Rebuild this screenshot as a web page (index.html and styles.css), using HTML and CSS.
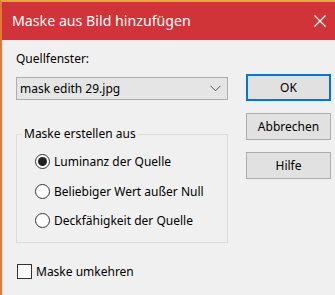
FILE: index.html
```html
<!DOCTYPE html>
<html lang="de">
<head>
  <meta charset="UTF-8" />
  <title>Maske aus Bild hinzufügen</title>
  <link rel="stylesheet" href="styles.css">
</head>
<body>

  <div class="window">
    <!-- Title bar -->
    <div class="titlebar">
      <span class="title">Maske aus Bild hinzufügen</span>
      <svg class="close" width="12" height="12" viewBox="0 0 12 12">
        <path d="M0.5 0.5 L11.5 11.5 M11.5 0.5 L0.5 11.5" stroke="#fff" stroke-width="1.2" fill="none"/>
      </svg>
    </div>

    <div class="content">
      <div class="left">
        <div class="label">Quellfenster:</div>
        <div class="combo">
          <span>mask edith 29.jpg</span>
          <svg width="11" height="7" viewBox="0 0 11 7">
            <path d="M0.5 0.8 L5.5 5.8 L10.5 0.8" stroke="#555" stroke-width="1" fill="none"/>
          </svg>
        </div>

        <fieldset class="group">
          <legend>Maske erstellen aus</legend>
          <div class="radio-row"><span class="radio checked"></span>Luminanz der Quelle</div>
          <div class="radio-row"><span class="radio"></span>Beliebiger Wert außer Null</div>
          <div class="radio-row"><span class="radio"></span>Deckfähigkeit der Quelle</div>
        </fieldset>

        <div class="check-row"><span class="checkbox"></span>Maske umkehren</div>
      </div>

      <div class="right">
        <button class="btn default">OK</button>
        <button class="btn">Abbrechen</button>
        <button class="btn">Hilfe</button>
      </div>
    </div>
  </div>

</body>
</html>
```

FILE: styles.css
```css
* { box-sizing: border-box; }
body {
  margin: 0;
  background: #f0f0f0;
  font-family: 'Noto Sans', 'Open Sans', sans-serif;
  font-size: 12px;
  color: #000;
  overflow: hidden;
}

.window {
  height: 295px;
  border-top: 2px solid #e6a83e;
  border-left: 2px solid #e5773a;
  background: #f0f0f0;
}

.titlebar {
  height: 38px;
  background: #d13438;
  display: flex;
  align-items: center;
  justify-content: space-between;
  padding: 0 9px 0 10px;
  color: #fff;
}

.title {
  font-size: 14.2px;
  margin-top: -2px;
}

.content {
  display: flex;
  padding: 11px 0 0 14px;
}

.left {
  width: 212px;
}

.label {
  line-height: 16px;
  margin-bottom: 10px;
}

.combo {
  height: 23px;
  background: #e5e5e5;
  border: 1px solid #adadad;
  display: flex;
  align-items: center;
  justify-content: space-between;
  padding: 0 6px 0 3px;
}

.group {
  margin: 26px 0 0 0;
  padding: 5px 0 0 18px;
  height: 117px;
  border: 1px solid #dcdcdc;
}

.group legend {
  padding: 0 2px;
  margin-left: -13px;
  line-height: 16px;
}

.radio-row {
  display: flex;
  align-items: center;
  height: 29.5px;
}

.radio {
  width: 15px;
  height: 15px;
  border: 1px solid #333;
  border-radius: 50%;
  background: #fff;
  margin-right: 4px;
  display: flex;
  align-items: center;
  justify-content: center;
}

.radio.checked::after {
  content: '';
  width: 9px;
  height: 9px;
  border-radius: 50%;
  background: #222;
}

.check-row {
  display: flex;
  align-items: center;
  margin-top: 20px;
}

.checkbox {
  width: 15px;
  height: 15px;
  border: 1px solid #333;
  background: #fff;
  margin: 0 4px 0 1px;
}

.right {
  display: flex;
  flex-direction: column;
  gap: 12px;
  margin: 23px 0 0 18px;
}

.btn {
  width: 85px;
  height: 27px;
  background: #e1e1e1;
  border: 1px solid #adadad;
  font-family: inherit;
  font-size: 12px;
  color: #000;
  padding: 0;
}

.btn.default {
  border: 2px solid #0078d7;
}
```
